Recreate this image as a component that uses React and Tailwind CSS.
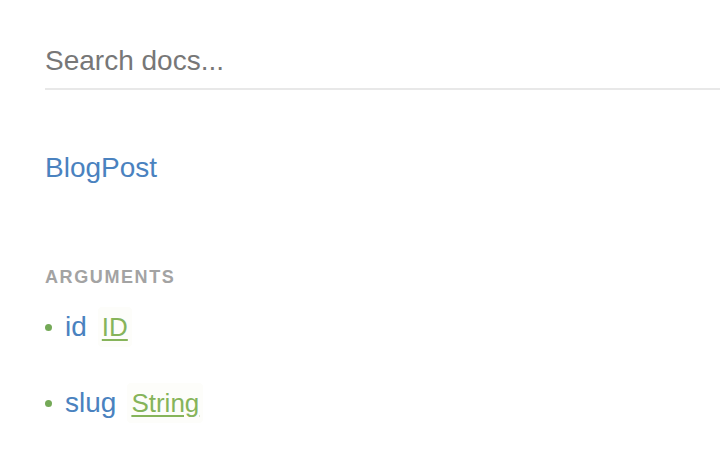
import React from 'react'

const args = [
    { name: 'id', type: 'ID' },
    { name: 'slug', type: 'String' },
]

export default function App() {
    return (
        <div className="min-h-[472px] w-[720px] bg-white pl-[45px] pt-[45px] font-['Liberation_Sans',Arial,sans-serif]">
            {/* search */}
            <div className="border-b-2 border-[#e8e8e8] pb-[11px]">
                <input
                    className="w-full bg-transparent text-[28px] leading-[32px] text-[#555] outline-none placeholder:text-[#777]"
                    placeholder="Search docs..."
                />
            </div>

            <div className="mt-[62px] text-[28px] leading-[32px] text-[#4a82bf]">BlogPost</div>

            <div className="mt-[83px] text-[18px] font-bold uppercase leading-[21px] tracking-[1.6px] text-[#a3a3a3]">
                Arguments
            </div>

            <ul className="mt-[19px] flex flex-col gap-[36px]">
                {args.map(a => (
                    <li key={a.name} className="flex items-center">
                        <span className="mr-[13px] h-[7px] w-[7px] rounded-full bg-[#74a957]" />
                        <span className="text-[28px] leading-[32px] text-[#4a82bf]">{a.name}</span>
                        <span className="ml-[11px] rounded-sm bg-[#fdfdfa] px-[4px] py-[4px] text-[26px] leading-[32px] text-[#86b45a] underline decoration-[#86b45a] underline-offset-[3px]">
                            {a.type}
                        </span>
                    </li>
                ))}
            </ul>
        </div>
    )
}
